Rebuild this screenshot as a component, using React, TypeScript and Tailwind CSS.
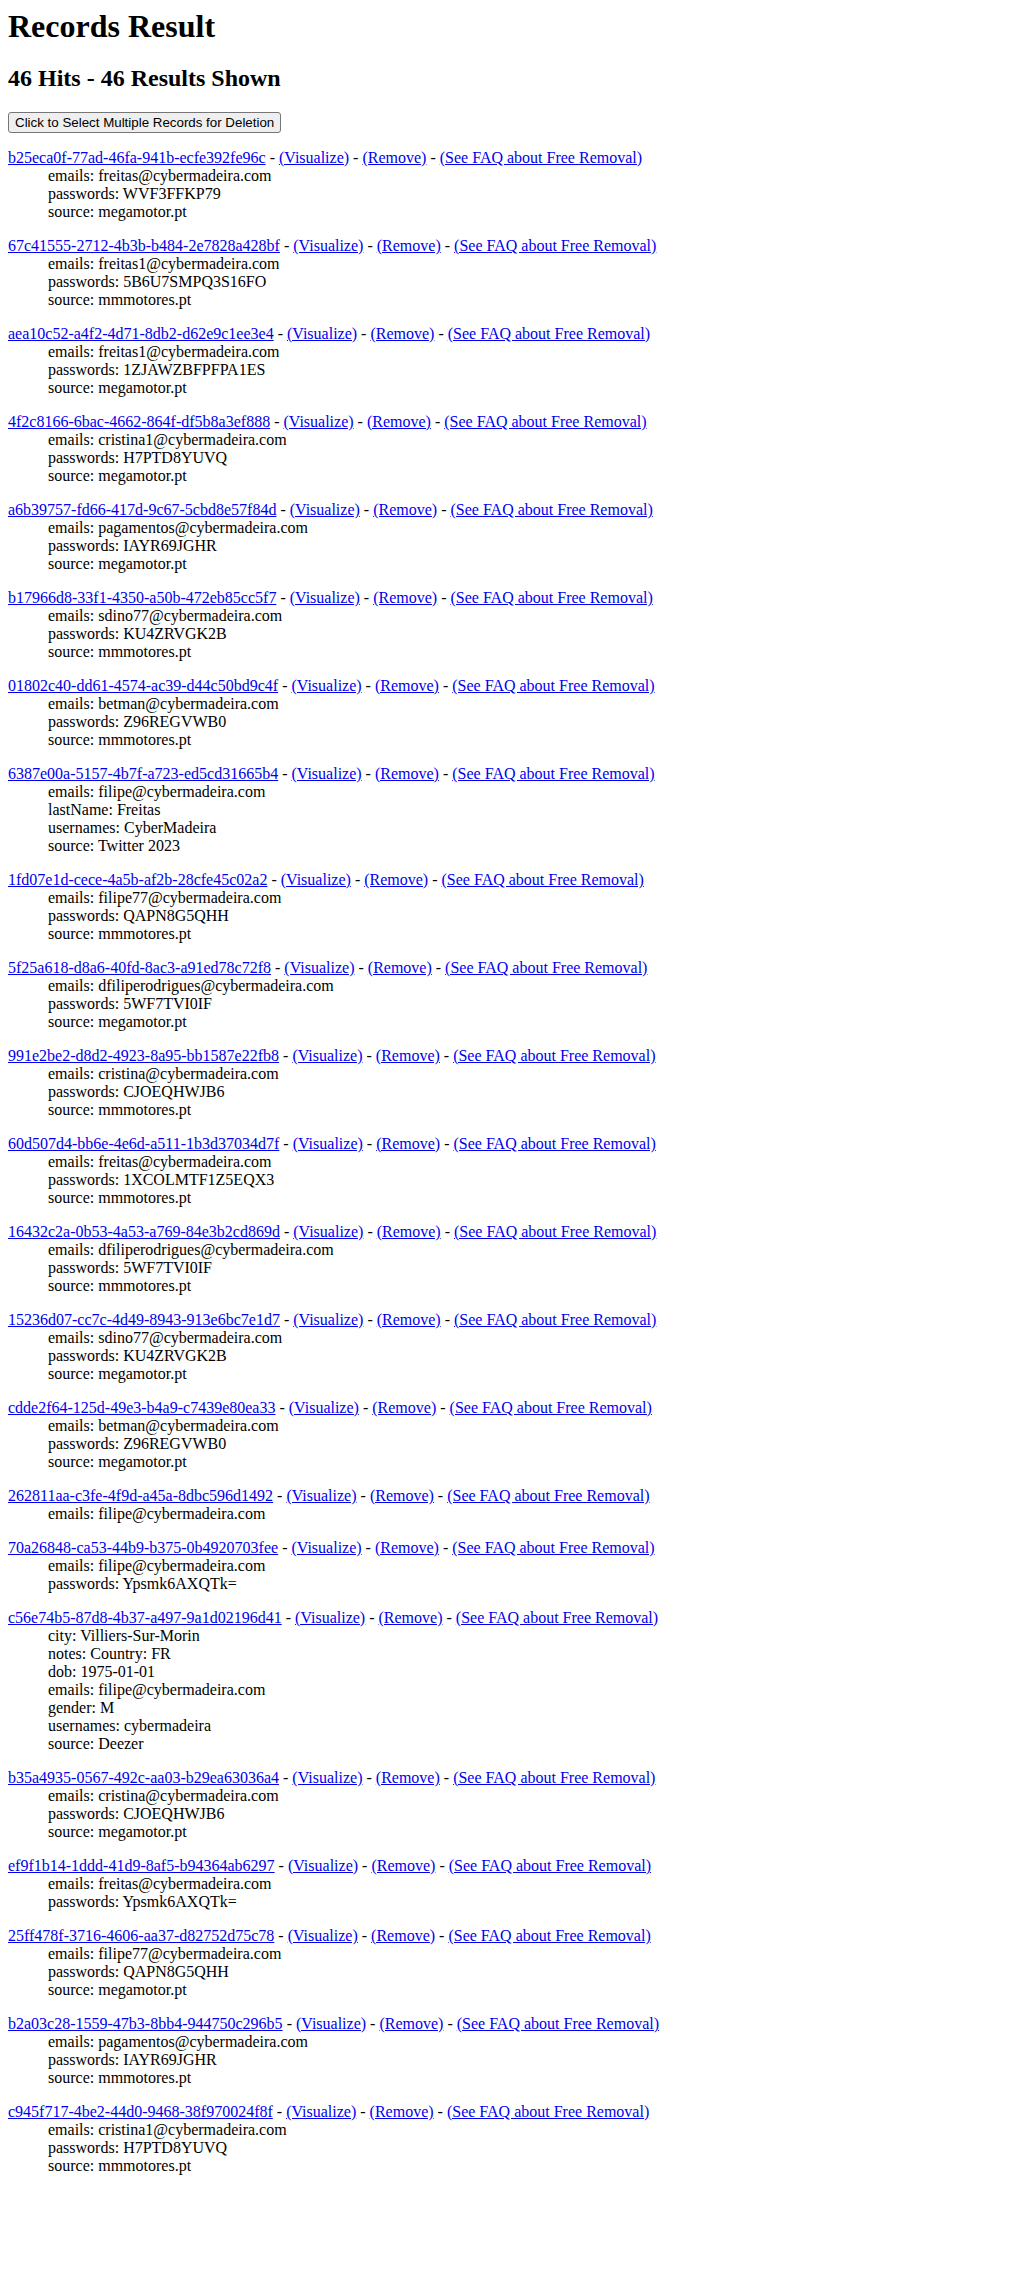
type Record = {
  id: string;
  fields: [string, string][];
};

const records: Record[] = [
  { id: "b25eca0f-77ad-46fa-941b-ecfe392fe96c", fields: [["emails", "freitas@cybermadeira.com"], ["passwords", "WVF3FFKP79"], ["source", "megamotor.pt"]] },
  { id: "67c41555-2712-4b3b-b484-2e7828a428bf", fields: [["emails", "freitas1@cybermadeira.com"], ["passwords", "5B6U7SMPQ3S16FO"], ["source", "mmmotores.pt"]] },
  { id: "aea10c52-a4f2-4d71-8db2-d62e9c1ee3e4", fields: [["emails", "freitas1@cybermadeira.com"], ["passwords", "1ZJAWZBFPFPA1ES"], ["source", "megamotor.pt"]] },
  { id: "4f2c8166-6bac-4662-864f-df5b8a3ef888", fields: [["emails", "cristina1@cybermadeira.com"], ["passwords", "H7PTD8YUVQ"], ["source", "megamotor.pt"]] },
  { id: "a6b39757-fd66-417d-9c67-5cbd8e57f84d", fields: [["emails", "pagamentos@cybermadeira.com"], ["passwords", "IAYR69JGHR"], ["source", "megamotor.pt"]] },
  { id: "b17966d8-33f1-4350-a50b-472eb85cc5f7", fields: [["emails", "sdino77@cybermadeira.com"], ["passwords", "KU4ZRVGK2B"], ["source", "mmmotores.pt"]] },
  { id: "01802c40-dd61-4574-ac39-d44c50bd9c4f", fields: [["emails", "betman@cybermadeira.com"], ["passwords", "Z96REGVWB0"], ["source", "mmmotores.pt"]] },
  { id: "6387e00a-5157-4b7f-a723-ed5cd31665b4", fields: [["emails", "filipe@cybermadeira.com"], ["lastName", "Freitas"], ["usernames", "CyberMadeira"], ["source", "Twitter 2023"]] },
  { id: "1fd07e1d-cece-4a5b-af2b-28cfe45c02a2", fields: [["emails", "filipe77@cybermadeira.com"], ["passwords", "QAPN8G5QHH"], ["source", "mmmotores.pt"]] },
  { id: "5f25a618-d8a6-40fd-8ac3-a91ed78c72f8", fields: [["emails", "dfiliperodrigues@cybermadeira.com"], ["passwords", "5WF7TVI0IF"], ["source", "megamotor.pt"]] },
  { id: "991e2be2-d8d2-4923-8a95-bb1587e22fb8", fields: [["emails", "cristina@cybermadeira.com"], ["passwords", "CJOEQHWJB6"], ["source", "mmmotores.pt"]] },
  { id: "60d507d4-bb6e-4e6d-a511-1b3d37034d7f", fields: [["emails", "freitas@cybermadeira.com"], ["passwords", "1XCOLMTF1Z5EQX3"], ["source", "mmmotores.pt"]] },
  { id: "16432c2a-0b53-4a53-a769-84e3b2cd869d", fields: [["emails", "dfiliperodrigues@cybermadeira.com"], ["passwords", "5WF7TVI0IF"], ["source", "mmmotores.pt"]] },
  { id: "15236d07-cc7c-4d49-8943-913e6bc7e1d7", fields: [["emails", "sdino77@cybermadeira.com"], ["passwords", "KU4ZRVGK2B"], ["source", "megamotor.pt"]] },
  { id: "cdde2f64-125d-49e3-b4a9-c7439e80ea33", fields: [["emails", "betman@cybermadeira.com"], ["passwords", "Z96REGVWB0"], ["source", "megamotor.pt"]] },
  { id: "262811aa-c3fe-4f9d-a45a-8dbc596d1492", fields: [["emails", "filipe@cybermadeira.com"]] },
  { id: "70a26848-ca53-44b9-b375-0b4920703fee", fields: [["emails", "filipe@cybermadeira.com"], ["passwords", "Ypsmk6AXQTk="]] },
  {
    id: "c56e74b5-87d8-4b37-a497-9a1d02196d41",
    fields: [
      ["city", "Villiers-Sur-Morin"],
      ["notes", "Country: FR"],
      ["dob", "1975-01-01"],
      ["emails", "filipe@cybermadeira.com"],
      ["gender", "M"],
      ["usernames", "cybermadeira"],
      ["source", "Deezer"],
    ],
  },
  { id: "b35a4935-0567-492c-aa03-b29ea63036a4", fields: [["emails", "cristina@cybermadeira.com"], ["passwords", "CJOEQHWJB6"], ["source", "megamotor.pt"]] },
  { id: "ef9f1b14-1ddd-41d9-8af5-b94364ab6297", fields: [["emails", "freitas@cybermadeira.com"], ["passwords", "Ypsmk6AXQTk="]] },
  { id: "25ff478f-3716-4606-aa37-d82752d75c78", fields: [["emails", "filipe77@cybermadeira.com"], ["passwords", "QAPN8G5QHH"], ["source", "megamotor.pt"]] },
  { id: "b2a03c28-1559-47b3-8bb4-944750c296b5", fields: [["emails", "pagamentos@cybermadeira.com"], ["passwords", "IAYR69JGHR"], ["source", "mmmotores.pt"]] },
  { id: "c945f717-4be2-44d0-9468-38f970024f8f", fields: [["emails", "cristina1@cybermadeira.com"], ["passwords", "H7PTD8YUVQ"], ["source", "mmmotores.pt"]] },
];

const linkCls = "text-[#0000ee] underline";

const App = () => {
  return (
    <div className="min-h-[2278px] bg-white p-2 font-['Liberation_Serif',serif] text-[16px] leading-[normal] text-black">
      <h1 className="text-[32px] font-bold leading-[normal]">Records Result</h1>
      <h2 className="my-[19.92px] text-[24px] font-bold leading-[normal]">
        46 Hits - 46 Results Shown
      </h2>

      <div>
        <button
          type="button"
          className="h-[21px] rounded-[3px] border border-[#767676] bg-[#efefef] px-[6px] font-['Liberation_Sans',Arial,sans-serif] text-[13.333px] leading-[normal] text-black"
        >
          Click to Select Multiple Records for Deletion
        </button>
      </div>

      {/* one block per record */}
      {records.map((rec) => (
        <dl key={rec.id} className="my-4">
          <dt>
            <a href="#" className={linkCls}>
              {rec.id}
            </a>{" "}
            -{" "}
            <a href="#" className={linkCls}>
              (Visualize)
            </a>{" "}
            -{" "}
            <a href="#" className={linkCls}>
              (Remove)
            </a>{" "}
            -{" "}
            <a href="#" className={linkCls}>
              (See FAQ about Free Removal)
            </a>
          </dt>
          {rec.fields.map(([k, v], i) => (
            <dd key={i} className="ml-10">
              {k}: {v}
            </dd>
          ))}
        </dl>
      ))}
    </div>
  );
};

export default App;
